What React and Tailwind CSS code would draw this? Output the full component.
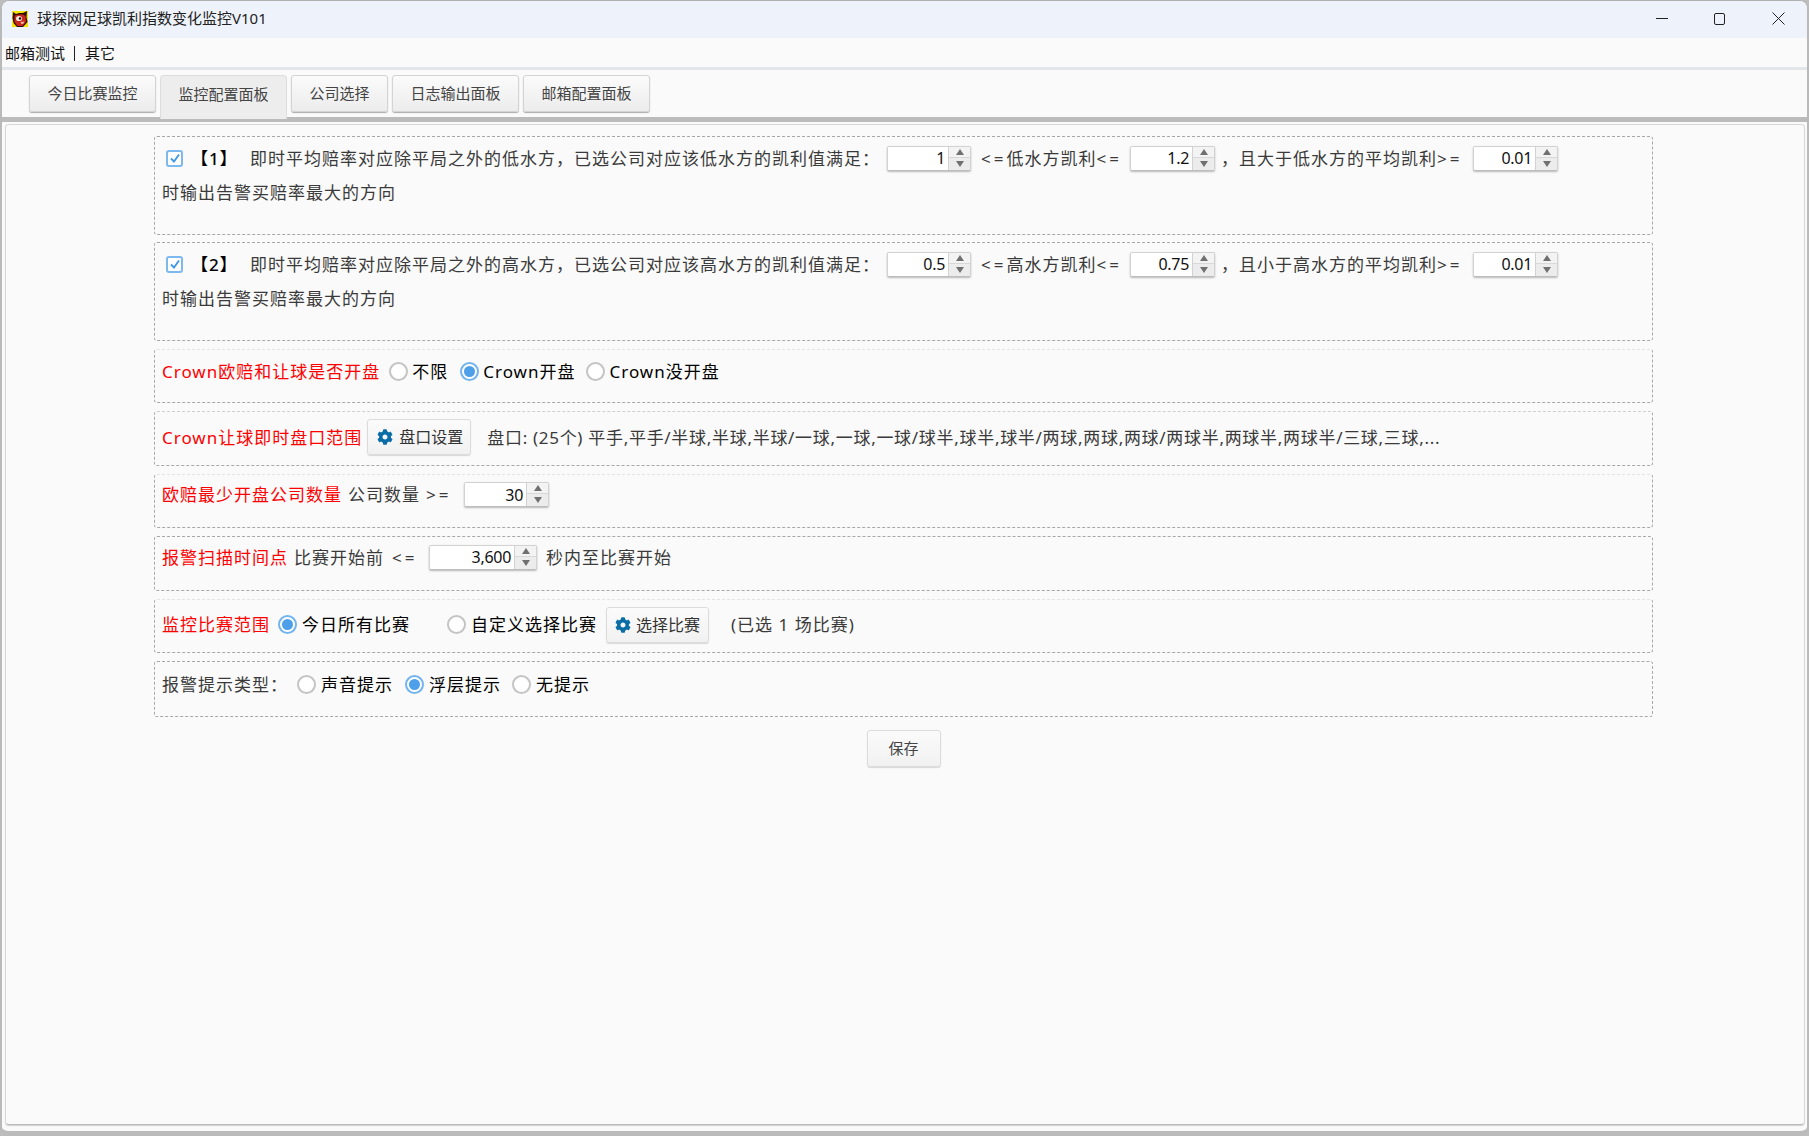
import React from "react";
import { FaCog } from "react-icons/fa";

function Logo() {
  return (
    <svg viewBox="0 0 16 16" className="w-4 h-4 shrink-0 ml-[10px]">
      <rect width="16" height="16" fill="#f5e400" />
      <path d="M1 1 L4 3 L7 2 L11 2 L15 0 L14.5 6 L15.5 11 L11 16 L5 16 L1.5 12 L0.5 7 Z" fill="#2a0c08" />
      <path d="M2.5 4.5 L7 3.5 L11 3.5 L13.5 5 L14 11 L10.5 15 L5.5 15 L2.5 11 Z" fill="#c8281e" />
      <ellipse cx="7" cy="7.5" rx="3" ry="2.6" fill="#f4e8e0" />
      <circle cx="8" cy="7.5" r="1.2" fill="#1a0a08" />
      <path d="M8.5 11 L12.5 10.5 L11 13 L9.5 13 Z" fill="#f2b8a8" />
    </svg>
  );
}

function Tab({ w, children }) {
  return (
    <div className={`${w} h-[37px] flex items-center justify-center rounded-[3px] border border-[#d4d4d4] bg-gradient-to-b from-[#fbfbfb] to-[#ececec] shadow-[0_1px_1px_#aaaaaa] text-[15px] text-[#444444] shrink-0`}>
      {children}
    </div>
  );
}

function Spinner({ w, value }) {
  return (
    <div className={`${w} h-[25px] flex rounded-[2px] border border-[#d2d2d2] border-b-[#bdbdbd] bg-white shadow-[0_1px_2px_#b8b8b8] shrink-0 tracking-normal`}>
      <div className="flex-1 flex items-center justify-end pr-[3px] text-[16px] tracking-[-0.3px] text-[#111111] font-['Noto_Sans',sans-serif]">{value}</div>
      <div className="w-[22px] shrink-0 flex flex-col border-l border-[#d2d2d2] bg-[#f1f1f1]">
        <div className="h-[11px] flex items-center justify-center border-b border-[#d8d8d8] bg-[#f3f3f3]">
          <div className="w-0 h-0 border-x-[4px] border-x-transparent border-b-[6px] border-b-[#707070]" />
        </div>
        <div className="flex-1 flex items-center justify-center bg-[#ececec]">
          <div className="w-0 h-0 border-x-[4px] border-x-transparent border-t-[6px] border-t-[#707070]" />
        </div>
      </div>
    </div>
  );
}

function Check() {
  return (
    <div className="w-[17px] h-[17px] rounded-[3px] border-2 border-[#7db8ee] bg-white flex items-center justify-center shrink-0">
      <svg viewBox="0 0 12 12" className="w-[12px] h-[12px]">
        <path d="M2 6.5 L5 9.5 L10 2.5" fill="none" stroke="#3d97e6" strokeWidth="1.8" />
      </svg>
    </div>
  );
}

function Radio({ on, cls = "" }) {
  return (
    <div className={`w-[19px] h-[19px] rounded-full border-2 shrink-0 flex items-center justify-center bg-white ${on ? "border-[#73b4ec]" : "border-[#c4c4c4]"} ${cls}`}>
      {on ? <div className="w-[11px] h-[11px] rounded-full bg-[#4c9fe8]" /> : null}
    </div>
  );
}

function GearBtn({ w, label, gearGap }) {
  return (
    <div className={`${w} h-[36px] shrink-0 flex items-center rounded-[3px] border border-[#dcdcdc] bg-gradient-to-b from-[#fbfbfb] to-[#f1f1f1] shadow-[0_1px_1px_#d8d8d8] text-[16px] tracking-normal text-[#333333]`}>
      <FaCog className={`text-[#0b6da6] text-[16px] shrink-0 ${gearGap}`} />
      <span>{label}</span>
    </div>
  );
}

function Row({ h, top = "border-t-[#a8a8a8]", children, cls = "items-center pb-[9px]" }) {
  return (
    <div className={`${h} rounded-[3px] border border-dashed border-[#a8a8a8] ${top} flex pl-[7px] ${cls} shrink-0`}>
      {children}
    </div>
  );
}

const Red = ({ children }) => <span className="text-[#ff0000] shrink-0">{children}</span>;
const Blk = ({ cls = "", children }) => <span className={`text-black shrink-0 ${cls}`}>{children}</span>;
const Gry = ({ cls = "", children }) => <span className={`text-[#3a3a3a] shrink-0 ${cls}`}>{children}</span>;
const Op = ({ children }) => <span className="tracking-[3px]">{children}</span>;

function ConfigRow({ h, n, mid, a, b, c, lab, tail }) {
  return (
    <Row h={h} cls="flex-col items-start pt-[8px]">
      <div className="flex items-center h-[26px]">
        <div className="ml-[4px]"><Check /></div>
        <span className="ml-[8px] w-[35px] text-black font-medium tracking-[1px] whitespace-nowrap">【{n}】</span>
        <Gry cls="ml-[24px] w-[637px] whitespace-nowrap">{mid}</Gry>
        <Spinner w="w-[84px]" value={a} />
        <Gry cls="ml-[10px] w-[149px] whitespace-nowrap"><Op>{"<="}</Op>{lab}<Op>{"<="}</Op></Gry>
        <Spinner w="w-[85px]" value={b} />
        <Gry cls="ml-[6px] w-[252px] whitespace-nowrap">{tail}<Op>{">="}</Op></Gry>
        <Spinner w="w-[85px]" value={c} />
      </div>
      <Gry cls="mt-[9px] leading-[26px]">时输出告警买赔率最大的方向</Gry>
    </Row>
  );
}

export default function App() {
  return (
    <div className="w-full h-screen bg-[#bdbdbd] overflow-hidden font-['Noto_Sans','Noto_Sans_CJK_SC',sans-serif]">
      <div className="h-full rounded-[9px] border-t border-x-2 border-b-[5px] border-t-[#b0b0b0] border-x-[#b9b9b9] border-b-[#bbbbbb] bg-[#fafafa] flex flex-col overflow-hidden">
        <div className="h-[37px] shrink-0 bg-[#eef3fb] flex items-center pb-[2px]">
          <Logo />
          <span className="ml-[9px] text-[15px] text-[#222222] whitespace-nowrap">球探网足球凯利指数变化监控V101</span>
          <div className="ml-auto flex items-center mr-[22px]">
            <div className="w-[12px] h-px bg-[#222222]" />
            <div className="ml-[46px] w-[11px] h-[12px] rounded-[2px] border border-[#222222]" />
            <svg viewBox="0 0 13 13" className="ml-[47px] w-[13px] h-[13px]">
              <path d="M0.5 0.5 L12.5 12.5 M12.5 0.5 L0.5 12.5" stroke="#222222" strokeWidth="1" />
            </svg>
          </div>
        </div>
        <div className="h-[29px] shrink-0 flex items-center text-[15px] text-[#111111] pl-[3px] pt-[2px]">
          <span>邮箱测试</span>
          <span className="ml-[9px] w-px h-[15px] bg-[#222222]" />
          <span className="ml-[10px]">其它</span>
        </div>
        <div className="h-[3px] shrink-0 bg-[#e3e6ea]" />
        <div className="h-[52px] shrink-0 border-b-[5px] border-[#bbbbbb] flex items-start pl-[27px] pt-[5px] gap-[4px]">
          <Tab w="w-[127px]">今日比赛监控</Tab>
          <div className="w-[127px] h-[44px] flex items-start pt-[7px] justify-center rounded-t-[4px] border border-b-0 border-[#dddddd] bg-[#ededed] text-[15px] text-[#444444] shrink-0 z-10">
            监控配置面板
          </div>
          <Tab w="w-[97px]">公司选择</Tab>
          <Tab w="w-[127px]">日志输出面板</Tab>
          <Tab w="w-[127px]">邮箱配置面板</Tab>
        </div>
        <div className="flex-1 ml-[3px] mr-[2px] mt-[2px] mb-[6px] rounded-[4px] border border-[#d8d8d8] border-b-[#bbbbbb] shadow-[0_1px_1px_#d0d0d0] pt-[11px] min-h-0">
          <div className="w-[1499px] ml-[148px] flex flex-col gap-[8px] text-[17px] tracking-[1px] leading-none whitespace-nowrap">
            <ConfigRow h="h-[99px]" n="1" mid="即时平均赔率对应除平局之外的低水方，已选公司对应该低水方的凯利值满足：" a="1" b="1.2" c="0.01" lab="低水方凯利" tail="，且大于低水方的平均凯利" />
            <div className="-mt-[1px]">
              <ConfigRow h="h-[99px]" n="2" mid="即时平均赔率对应除平局之外的高水方，已选公司对应该高水方的凯利值满足：" a="0.5" b="0.75" c="0.01" lab="高水方凯利" tail="，且小于高水方的平均凯利" />
            </div>

            <Row h="h-[54px]" top="border-t-[#e4e4e4]">
              <Red>Crown欧赔和让球是否开盘</Red>
              <Radio cls="ml-[9px]" />
              <Blk cls="ml-[4px]">不限</Blk>
              <Radio on cls="ml-[12px]" />
              <Blk cls="ml-[4px]">Crown开盘</Blk>
              <Radio cls="ml-[10px]" />
              <Blk cls="ml-[5px]">Crown没开盘</Blk>
            </Row>

            <Row h="h-[55px]" top="border-t-[#cfcfcf]" cls="items-center pb-[3px]">
              <Red>Crown让球即时盘口范围</Red>
              <div className="ml-[5px]"><GearBtn w="w-[104px]" label="盘口设置" gearGap="ml-[9px] mr-[6px]" /></div>
              <span className="ml-[16px] text-[17px] tracking-[0.7px] text-[#3a3a3a]">盘口: (25个) 平手,平手/半球,半球,半球/一球,一球,一球/球半,球半,球半/两球,两球,两球/两球半,两球半,两球半/三球,三球,...</span>
            </Row>

            <Row h="h-[54px]" top="border-t-[#e4e4e4]" cls="items-center pb-[13px]">
              <Red>欧赔最少开盘公司数量</Red>
              <Gry cls="ml-[6px]">公司数量</Gry>
              <Gry cls="ml-[6px] w-[38px]"><Op>{">="}</Op></Gry>
              <Spinner w="w-[85px]" value="30" />
            </Row>

            <Row h="h-[55px]" cls="items-center pb-[13px]">
              <Red>报警扫描时间点</Red>
              <Gry cls="ml-[6px]">比赛开始前</Gry>
              <Gry cls="ml-[8px] w-[37px]"><Op>{"<="}</Op></Gry>
              <Spinner w="w-[108px]" value="3,600" />
              <Gry cls="ml-[9px]">秒内至比赛开始</Gry>
            </Row>

            <Row h="h-[54px]" top="border-t-[#e4e4e4]" cls="items-center pb-[3px]">
              <Red>监控比赛范围</Red>
              <Radio on cls="ml-[8px]" />
              <Blk cls="ml-[5px]">今日所有比赛</Blk>
              <Radio cls="ml-[37px]" />
              <Blk cls="ml-[5px]">自定义选择比赛</Blk>
              <div className="ml-[9px]"><GearBtn w="w-[103px]" label="选择比赛" gearGap="ml-[8px] mr-[5px]" /></div>
              <Gry cls="ml-[22px]">(已选 1 场比赛)</Gry>
            </Row>

            <Row h="h-[56px]" cls="items-center pb-[10px]">
              <Gry>报警提示类型：</Gry>
              <Radio cls="ml-[9px]" />
              <Blk cls="ml-[5px]">声音提示</Blk>
              <Radio on cls="ml-[12px]" />
              <Blk cls="ml-[5px]">浮层提示</Blk>
              <Radio cls="ml-[11px]" />
              <Blk cls="ml-[5px]">无提示</Blk>
            </Row>

            <div className="mt-[5px] flex justify-center">
              <div className="w-[74px] h-[37px] flex items-center justify-center rounded-[3px] border border-[#dcdcdc] bg-gradient-to-b from-[#fbfbfb] to-[#f1f1f1] shadow-[0_1px_1px_#d8d8d8] text-[15px] tracking-normal text-[#444444]">
                保存
              </div>
            </div>
          </div>
        </div>
      </div>
    </div>
  );
}
